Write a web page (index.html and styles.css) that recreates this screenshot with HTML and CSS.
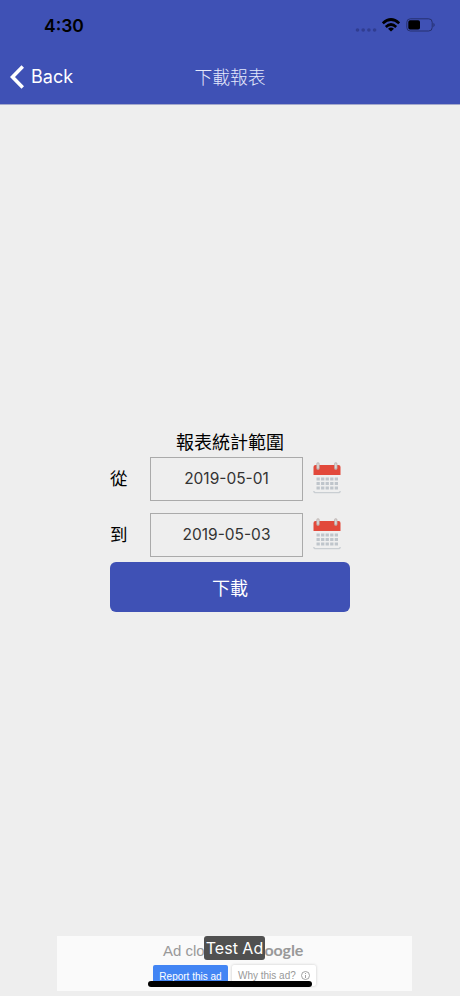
FILE: index.html
```html
<!DOCTYPE html>
<html lang="zh-Hant">
  <head>
    <meta charset="UTF-8">
    <meta name="viewport" content="width=device-width, initial-scale=1.0">
    <title>下載報表</title>
    <link rel="stylesheet" href="styles.css">
  </head>
  <body>
    <!-- shared calendar icon -->
    <svg class="hidden">
      <symbol id="calendar" viewBox="0 0 28 32">
        <path d="M1 12h26v17a2 2 0 0 1-2 2H3a2 2 0 0 1-2-2z" fill="#efefef"/>
        <path d="M.8 29q0 1.700 2 1.700h22.400q2 0 2-1.700" fill="none" stroke="#c9ced2" stroke-width="1.300"/>
        <path d="M.5 13V5q0-2 2-2h23q2 0 2 2v8z" fill="#e2493b"/>
        <path d="M3.500 17h21.500M3.500 21.500h21.500M3.500 26h21.500" stroke="#bfc5cb" stroke-width="3.200" stroke-dasharray="3.300 1.250" fill="none"/>
        <path d="M5 1.800v4.400M22.800 1.800v4.400" stroke="#bdb5b3" stroke-width="3.200" stroke-linecap="round"/>
        <path d="M5 2v3.800M22.800 2v3.800" stroke="#dedbd9" stroke-width="1.400" stroke-linecap="round"/>
      </symbol>
    </svg>

    <div id="app" class="flex-column">
      <header>
        <div class="status-bar flex">
          <span class="time">4:30</span>
          <div class="status-icons flex">
            <svg width="22" height="6" viewBox="0 0 22 6" fill="#303d91">
              <circle cx="2.500" cy="3" r="1.800"/>
              <circle cx="8.200" cy="3" r="1.800"/>
              <circle cx="13.900" cy="3" r="1.800"/>
              <circle cx="19.600" cy="3" r="1.800"/>
            </svg>
            <svg class="wifi" width="18" height="14" viewBox="0 0 18 14" fill="none" stroke="#000" stroke-width="2.700">
              <path d="M.8 5.300Q9-2.300 17.200 5.300"/>
              <path d="M3.800 8.900q5.200-4.800 10.400 0"/>
              <path d="M9 13.500 6 10.700q3-2.500 6 0z" fill="#000" stroke="none"/>
            </svg>
            <svg width="30" height="14" viewBox="0 0 30 14">
              <rect x=".8" y=".8" width="25.400" height="12.200" rx="3.500" fill="none" stroke="#26306f" stroke-width="1"/>
              <rect x="2.300" y="2.300" width="11.700" height="9.200" rx="1.800"/>
              <path d="M27.500 4.800q2.200 2.200 0 4.400z" fill="#202a68"/>
            </svg>
          </div>
        </div>
        <nav class="nav-bar">
          <a class="back flex">
            <svg width="14" height="24" viewBox="0 0 14 24" fill="none" stroke="#fff" stroke-width="3.600">
              <path d="M12.800 1.500 2.500 12l10.300 10.500"/>
            </svg>
            <span>Back</span>
          </a>
          <h1>下載報表</h1>
        </nav>
      </header>

      <main class="flex-grow-1">
        <form class="report-form flex-column">
          <h2>報表統計範圍</h2>
          <div class="date-row flex">
            <label>從</label>
            <div class="date-field">2019-05-01</div>
            <svg class="calendar"><use href="#calendar"/></svg>
          </div>
          <div class="date-row flex">
            <label>到</label>
            <div class="date-field">2019-05-03</div>
            <svg class="calendar"><use href="#calendar"/></svg>
          </div>
          <button type="button">下載</button>
        </form>
      </main>

      <footer class="ad-banner">
        <p class="ad-text">Ad closed by <span class="ad-brand">Google</span></p>
        <div class="ad-actions flex">
          <span class="ad-report">Report this ad</span>
          <span class="ad-why flex">Why this ad?
            <svg width="9" height="9" viewBox="0 0 9 9" fill="none" stroke="#999" stroke-width=".9">
              <circle cx="4.500" cy="4.500" r="4"/>
              <path d="M4.500 4v3M4.500 2v1"/>
            </svg>
          </span>
        </div>
        <span class="test-label">Test Ad</span>
        <div class="home-indicator"></div>
      </footer>
    </div>
  </body>
</html>
```
FILE: styles.css
```css
:root {
	--primary-blue: #3f51b5;
	--background: #eeeeee;
	--border-gray: #aaaaaa;
}

/* Resets */
* {
	margin: 0;
	padding: 0;
	box-sizing: border-box;
}

body {
	font-family: Inter, "Noto Sans CJK TC", sans-serif;
	background: var(--background);
	color: #000;
}

svg {
	display: block;
	flex-shrink: 0;
}

/* Helper Classes */
.flex {
	display: flex;
	align-items: center;
}

.flex-column {
	display: flex;
	flex-direction: column;
}

.flex-grow-1 {
	flex-grow: 1;
}

.hidden {
	display: none;
}

#app {
	height: 996px;
	overflow: hidden;
}

/* Header */
header {
	height: 105px;
	background: var(--primary-blue);
	border-bottom: 1px solid #a4a9cb;
}

.status-bar {
	height: 50px;
	padding: 0 24px 0 44px;
	justify-content: space-between;
}

.time {
	font-size: 17.5px;
	font-weight: 600;
}

.status-icons svg:first-child {
	margin-top: 9px;
}

.wifi {
	margin: 0 6px 0 5px;
}

.nav-bar {
	display: grid;
	grid-template-columns: 1fr auto 1fr;
	align-items: center;
	height: 54px;
	padding: 0 10px;
	color: #fff;
}

.back {
	gap: 7px;
	font-size: 18px;
	line-height: 22px;
}

.back span {
	margin-top: -1px;
}

h1 {
	padding-top: 1px;
	font-size: 17.8px;
	font-weight: 300;
	line-height: 24px;
	color: #e4e8fb;
}

/* Report form */
main {
	padding-top: 326px;
}

.report-form {
	width: 240px;
	margin: 0 auto;
}

h2 {
	height: 26px;
	font-size: 18px;
	font-weight: 400;
	line-height: 24px;
	text-align: center;
}

.date-row {
	height: 44px;
	margin-bottom: 12px;
}

.date-row + .date-row {
	margin-bottom: 5px;
}

.date-row label {
	width: 40px;
	padding-bottom: 3px;
	font-size: 17.5px;
}

.date-field {
	width: 153px;
	height: 44px;
	border: 1px solid var(--border-gray);
	color: #333;
	font-size: 15.5px;
	line-height: 42px;
	text-align: center;
}

.calendar {
	width: 28px;
	height: 32px;
	margin: 0 0 2px 10px;
}

button {
	height: 50px;
	border: none;
	border-radius: 6px;
	background: var(--primary-blue);
	color: #fff;
	font-family: inherit;
	font-size: 18px;
}

/* Ad */
.ad-banner {
	position: relative;
	width: 355px;
	height: 55px;
	margin: 0 48px 5px 57px;
	background: #fafafa;
	font-family: "Liberation Sans", Arial, sans-serif;
}

.ad-text {
	padding: 4px 0 0 106px;
	color: #999;
	font-size: 15px;
	line-height: 20px;
	white-space: nowrap;
}

.ad-brand {
	font-family: Lato, sans-serif;
	font-size: 16px;
	font-weight: 700;
	letter-spacing: -0.1px;
}

.ad-actions {
	gap: 4px;
	padding: 4px 0 0 96px;
	font-size: 10px;
}

.ad-report {
	width: 75px;
	height: 21px;
	border-radius: 2px;
	background: #4285f4;
	color: #fff;
	line-height: 23px;
	text-align: center;
	white-space: nowrap;
}

.ad-why {
	gap: 5px;
	width: 84px;
	height: 21px;
	padding-left: 6px;
	border-radius: 2px;
	background: #fff;
	box-shadow: 0 0 3px rgba(0, 0, 0, 0.2);
	color: #999;
	white-space: nowrap;
}

.test-label {
	position: absolute;
	top: 0;
	left: 147px;
	width: 61px;
	height: 24px;
	border-radius: 3px;
	background: #505050;
	color: #fff;
	font-family: Inter, sans-serif;
	font-size: 16px;
	line-height: 24px;
	text-align: center;
	white-space: nowrap;
}

.home-indicator {
	position: absolute;
	left: 91px;
	top: 45px;
	width: 164px;
	height: 6px;
	border-radius: 3px;
	background: #000;
}
```
